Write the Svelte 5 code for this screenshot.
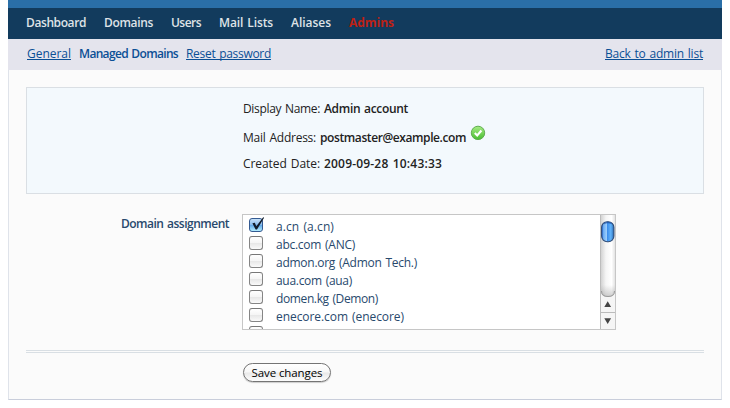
<script>
  const tabs = [
    { name: 'Dashboard', width: 60 },
    { name: 'Domains', width: 49 },
    { name: 'Users', width: 30 },
    { name: 'Mail Lists', width: 54 },
    { name: 'Aliases', width: 40 },
    { name: 'Admins', width: 45, active: true },
  ];

  const domains = [
    { label: 'a.cn (a.cn)', width: 58, checked: true },
    { label: 'abc.com (ANC)', width: 79 },
    { label: 'admon.org (Admon Tech.)', width: 141 },
    { label: 'aua.com (aua)', width: 76 },
    { label: 'domen.kg (Demon)', width: 102 },
    { label: 'enecore.com (enecore)', width: 128 },
    { label: '', width: 0 },
  ];

  // Spreads the letters of a label evenly over the given width.
  function fit(node, width) {
    const count = node.textContent.length;
    if (!count) return;
    const natural = node.getBoundingClientRect().width;
    node.style.letterSpacing = `${(width - natural) / count}px`;
  }
</script>

<div class="page">
  <div class="strip"></div>
  <nav class="tabs">
    {#each tabs as tab}
      <a href="#tab" class:active={tab.active}><span use:fit={tab.width}>{tab.name}</span></a>
    {/each}
  </nav>
  <div class="subnav">
    <a href="#general"><span use:fit={44}>General</span></a>
    <b><span use:fit={99}>Managed Domains</span></b>
    <a href="#password"><span use:fit={85}>Reset password</span></a>
    <a class="back" href="#list"><span use:fit={98}>Back to admin list</span></a>
  </div>

  <main>
    <section class="info">
      <p><span use:fit={77}>Display Name:</span><b use:fit={84}>Admin account</b></p>
      <p class="mail">
        <span use:fit={73}>Mail Address:</span><b use:fit={146}>postmaster@example.com</b>
        <svg width="16" height="16" viewBox="0 0 16 16">
          <defs>
            <linearGradient id="ok" x1="0" y1="0" x2="0" y2="1">
              <stop offset="0" stop-color="#a6ec83" />
              <stop offset="1" stop-color="#48bd32" />
            </linearGradient>
          </defs>
          <circle cx="8" cy="7.9" r="6.7" fill="url(#ok)" stroke="#5fae50" />
          <path d="M4.8 8l2.4 2.5 4.2-5" fill="none" stroke="#fff" stroke-width="2.1" />
        </svg>
      </p>
      <p class="date"><span use:fit={77}>Created Date:</span><b use:fit={118}>2009-09-28 10:43:33</b></p>
    </section>

    <section class="assign">
      <b class="caption"><span use:fit={108}>Domain assignment</span></b>
      <div class="list">
        <div class="rows">
          {#each domains as domain}
            <div class="row">
              <span class="check" class:on={domain.checked}>
                {#if domain.checked}
                  <svg width="17" height="17" viewBox="0 0 17 17">
                    <path d="M3.4 7.2l2.4-.5 1.5 3.5L14.2 1.2l.9.6L8 13.5H6.6z" fill="#111c2b" />
                  </svg>
                {/if}
              </span>
              <span class="label"><span use:fit={domain.width}>{domain.label}</span></span>
            </div>
          {/each}
        </div>
        <svg class="scroll" width="15" height="114" viewBox="0 0 15 114">
          <defs>
            <linearGradient id="track">
              <stop offset="0" stop-color="#d3d3d3" />
              <stop offset=".35" stop-color="#f5f5f5" />
              <stop offset=".75" stop-color="#fff" />
              <stop offset="1" stop-color="#e3e3e3" />
            </linearGradient>
            <linearGradient id="thumb">
              <stop offset="0" stop-color="#1957c9" />
              <stop offset=".16" stop-color="#6eaef3" />
              <stop offset=".4" stop-color="#9bcdfb" />
              <stop offset=".47" stop-color="#3c8deb" />
              <stop offset=".75" stop-color="#62b4fa" />
              <stop offset="1" stop-color="#2869b4" />
            </linearGradient>
            <linearGradient id="shade" x1="0" y1="0" x2="0" y2="1">
              <stop offset="0" stop-color="#999" stop-opacity="0" />
              <stop offset="1" stop-color="#999" stop-opacity=".5" />
            </linearGradient>
          </defs>
          <rect width="15" height="114" fill="#f5f5f5" />
          <path d="M1 0h14v76q0 6-7 6t-7-6z" fill="url(#track)" />
          <path d="M1 70h14v6q0 6-7 6t-7-6z" fill="url(#shade)" />
          <path d="M1.5 76q0 5.5 6.5 5.5t6.5-5.5" fill="none" stroke="#999" />
          <rect x="1.6" y="6.7" width="12.3" height="20" rx="5.6" fill="url(#thumb)" stroke="#304d78" stroke-width="1.1" />
          <path d="M4 8.6q3.8-2 7.6 0" fill="none" stroke="#15479c" stroke-width="1.5" opacity=".6" />
          <path d="M4.3 92l3.4-5.7 3.4 5.7zM4.3 103.2h6.8l-3.4 5.7z" fill="#444" />
          <path d="M0 97.5h15" stroke="#bbb" />
          <path d="M.5 0v114" stroke="#bdbdbd" />
        </svg>
      </div>
    </section>

    <div class="rule"></div>
    <button type="button"><span use:fit={71}>Save changes</span></button>
  </main>
</div>

<style>
  :global(body) {
    margin: 0;
    background: #fff;
  }
  .page {
    box-sizing: border-box;
    width: 714px;
    height: 400px;
    margin-left: 8px;
    font: 12px/18px 'Open Sans', sans-serif;
    word-spacing: 1px;
    color: #222;
    white-space: nowrap;
  }
  b {
    font-weight: 600;
  }
  .strip {
    height: 8px;
    background: #2a6fa8;
  }
  .tabs,
  .subnav {
    display: flex;
    align-items: center;
    box-sizing: border-box;
    height: 31px;
    padding: 0 19px 2px 18px;
  }
  .tabs {
    gap: 18px;
    background: #123b5d;
  }
  .tabs a {
    color: #dfe3e7;
    font-weight: 600;
    text-decoration: none;
  }
  .tabs a.active {
    color: #bd2115;
    font-weight: 700;
  }
  .subnav {
    gap: 8px;
    padding-left: 19px;
    background: #e4e4ed;
    color: #0b4f95;
  }
  .subnav a {
    color: #0b4f95;
    text-underline-offset: 1px;
    text-decoration-thickness: 1px;
    text-decoration-skip-ink: none;
  }
  .back {
    margin-left: auto;
  }
  main {
    box-sizing: border-box;
    height: 330px;
    padding: 17px 17px 0;
    background: #fbfbfb;
    border: 1px solid #dfe3ea;
    border-top: 0;
    border-bottom-color: #c9cedb;
  }
  .info {
    box-sizing: border-box;
    height: 107px;
    padding: 12px 0 0 216px;
    border: 1px solid #dadfe4;
    background: #f3f9fd;
  }
  p {
    display: flex;
    gap: 4px;
    height: 18px;
    margin: 0;
  }
  .mail {
    margin-top: 11px;
  }
  .mail svg {
    margin-top: -4px;
  }
  .date {
    margin-top: 8px;
  }
  .assign {
    display: flex;
    gap: 13px;
    margin-top: 20px;
    color: #28496d;
  }
  .caption {
    width: 203px;
    padding-top: 1px;
    text-align: right;
  }
  .list {
    display: flex;
    box-sizing: border-box;
    width: 374px;
    height: 116px;
    overflow: hidden;
    border: 1px solid #c6c6c6;
    background: #fff;
  }
  .rows {
    flex: 1;
    padding: 2px 0 0 6px;
  }
  .row {
    display: flex;
    gap: 13px;
    height: 18px;
  }
  .label {
    padding-top: 1px;
  }
  .check {
    box-sizing: border-box;
    width: 14px;
    height: 14px;
    margin-top: 1px;
    border: 1px solid #858585;
    border-top-color: #777;
    border-radius: 3px;
    background: linear-gradient(#fff 0%, #f5f5f5 48%, #e7e7e7 52%, #fafafa 100%);
  }
  .check.on {
    border-color: #345a91;
    background: linear-gradient(#c6e1f9 0%, #8fc0ee 45%, #62a9e8 52%, #b3edff 100%);
  }
  .check svg {
    display: block;
    margin: -3px 0 0 -1px;
  }
  .scroll {
    flex: none;
  }
  .rule {
    height: 1px;
    margin-top: 20px;
    border: solid #d9dfe4;
    border-width: 1px 0;
  }
  button {
    display: flex;
    align-items: center;
    justify-content: center;
    box-sizing: border-box;
    width: 88px;
    height: 19px;
    margin: 10px 0 0 217px;
    padding: 0;
    border: 1px solid #747474;
    border-radius: 10px;
    background: linear-gradient(#fff 0%, #f7f7f7 48%, #e9e9e9 52%, #fcfcfc 100%);
    box-shadow: 0 1px 1px #ccc;
    font: 11.5px/16px 'Open Sans', sans-serif;
    color: #000;
  }
</style>
